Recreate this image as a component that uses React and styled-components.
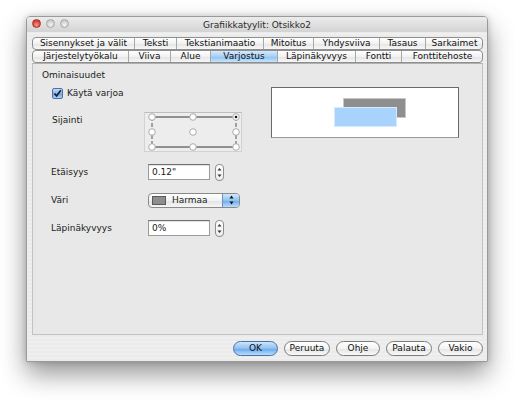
import React from "react";
import styled, { createGlobalStyle } from "styled-components";

const Global = createGlobalStyle`
  html, body { margin: 0; padding: 0; background: #ffffff; }
  body { font-family: "DejaVu Sans", "Liberation Sans", sans-serif; font-size: 9px; color: #1a1a1a; }
`;

const Page = styled.div`
  width: 515px;
  height: 400px;
  padding: 16px 0 0 26px;
  box-sizing: border-box;
`;

const Window = styled.div`
  width: 462px;
  height: 346px;
  box-sizing: border-box;
  border: 1px solid #9a9a9a;
  border-radius: 4px 4px 0 0;
  background: repeating-linear-gradient(#efefef 0 2px, #ebebeb 2px 4px);
  box-shadow: 0 12px 26px rgba(0, 0, 0, 0.42), 0 0 6px rgba(0, 0, 0, 0.18);
  display: flex;
  flex-direction: column;
`;

const TitleBar = styled.div`
  height: 15px;
  flex: none;
  position: relative;
  display: flex;
  align-items: center;
  justify-content: center;
  background: linear-gradient(#ececec, #d3d3d3);
  border-radius: 3px 3px 0 0;
  color: #2a2a2a;
  font-size: 9px;
`;

const Lights = styled.div`
  position: absolute;
  left: 5px;
  top: 2px;
  display: flex;
  gap: 5px;
`;

const Light = styled.span`
  width: 9px;
  height: 9px;
  border-radius: 50%;
  box-sizing: border-box;
  border: 1px solid ${(p) => (p.$red ? "#a5322a" : "#a9a9a9")};
  background: ${(p) =>
    p.$red
      ? "radial-gradient(circle at 50% 70%, #f49a8c, #d9493a 60%, #b8302a)"
      : "radial-gradient(circle at 50% 70%, #f4f4f4, #d0d0d0 60%, #bcbcbc)"};
`;

const Body = styled.div`
  flex: 1;
  display: flex;
  flex-direction: column;
  padding: 5px 4px 5px 5px;
  min-height: 0;
`;

const TabRow = styled.div`
  display: flex;
  height: 13px;
  box-sizing: border-box;
  border: 1px solid #8e8e8e;
  border-radius: 4px;
  background: linear-gradient(#ffffff, #f2f2f2 50%, #e4e4e4 51%, #f7f7f7);
  overflow: hidden;
  flex: none;
`;

const Tab = styled.div`
  width: ${(p) => p.$w}px;
  flex: none;
  box-sizing: border-box;
  display: flex;
  align-items: center;
  justify-content: center;
  font-size: 9px;
  line-height: 11px;
  white-space: nowrap;
  color: #111;
  & + & { border-left: 1px solid #a8a8a8; }
  ${(p) =>
    p.$active &&
    `background: linear-gradient(#d6eafc, #a7cff4 50%, #8cc1f0 51%, #c7e4fc);`}
`;

const Panel = styled.div`
  flex: 1;
  box-sizing: border-box;
  border: 1px solid #c2c2c2;
  border-top-color: #b0b0b0;
  background: #e8e8e8;
  padding: 5px 23px 0 9px;
  display: flex;
  flex-direction: column;
`;

const GroupTitle = styled.div`
  height: 12px;
  line-height: 12px;
  font-size: 9px;
`;

const TopSection = styled.div`
  display: flex;
  margin-top: 6px;
`;

const LeftCol = styled.div`
  display: flex;
  flex-direction: column;
  padding-left: 10px;
`;

const CheckRow = styled.label`
  display: flex;
  align-items: center;
  gap: 4px;
  height: 12px;
  font-size: 9px;
`;

const CheckBox = styled.span`
  width: 11px;
  height: 11px;
  box-sizing: border-box;
  border: 1px solid #4d6fa0;
  border-radius: 2px;
  background: linear-gradient(#c3dcf8, #7fb1ea 50%, #5f9fe6 51%, #a9d3fb);
  display: flex;
  align-items: center;
  justify-content: center;
`;

const PosRow = styled.div`
  display: flex;
  margin-top: 13px;
`;

const Label = styled.div`
  width: ${(p) => p.$w}px;
  flex: none;
  font-size: 9px;
  line-height: ${(p) => (p.$lh ? p.$lh : 16)}px;
  padding-top: ${(p) => p.$pt || 0}px;
  white-space: nowrap;
`;

const PosBox = styled.div`
  width: 98px;
  height: 40px;
  box-sizing: border-box;
  border: 1px solid #d2d2d2;
  border-top-color: #bdbdbd;
  background: #ededed;
`;

const Preview = styled.div`
  margin-left: auto;
  width: 188px;
  height: 51px;
  box-sizing: border-box;
  border: 1px solid #6a6a6a;
  border-bottom-color: #9a9a9a;
  background: #ffffff;
`;

const Fields = styled.div`
  display: flex;
  flex-direction: column;
  gap: 12px;
  margin-top: 12px;
  padding-left: 9px;
`;

const FieldRow = styled.div`
  display: flex;
  align-items: center;
  height: 16px;
`;

const TextInput = styled.div`
  width: 62px;
  height: 16px;
  box-sizing: border-box;
  border: 1px solid #9c9c9c;
  border-top-color: #6e6e6e;
  background: #ffffff;
  box-shadow: inset 0 1px 1px rgba(0, 0, 0, 0.12);
  font-size: 9px;
  line-height: 14px;
  padding-left: 3px;
`;

const Spinner = styled.div`
  width: 9px;
  height: 17px;
  margin-left: 5px;
  box-sizing: border-box;
  border: 1px solid #8e8e8e;
  border-radius: 4px;
  background: linear-gradient(#ffffff, #ececec);
  display: flex;
  align-items: center;
  justify-content: center;
`;

const Popup = styled.div`
  width: 92px;
  height: 15px;
  box-sizing: border-box;
  border: 1px solid #8a8a8a;
  border-radius: 4px;
  display: flex;
  overflow: hidden;
  background: linear-gradient(#ffffff, #f3f3f3 50%, #e3e3e3 51%, #f6f6f6);
`;

const PopupMain = styled.div`
  flex: 1;
  display: flex;
  align-items: center;
  padding-left: 3px;
  gap: 6px;
  font-size: 9px;
`;

const Swatch = styled.span`
  width: 14px;
  height: 9px;
  box-sizing: border-box;
  border: 1px solid #5a5a5a;
  background: #8e8e8e;
`;

const PopupArrow = styled.div`
  width: 16px;
  flex: none;
  border-left: 1px solid #6a8fc0;
  background: linear-gradient(#d3e8fc, #8fc2f1 50%, #6aaaea 51%, #b9dcfc);
  display: flex;
  align-items: center;
  justify-content: center;
`;

const ButtonRow = styled.div`
  display: flex;
  justify-content: flex-end;
  gap: 6px;
  margin-top: 6px;
  height: 15px;
  flex: none;
`;

const Button = styled.button`
  width: ${(p) => p.$w}px;
  height: 15px;
  padding: 0;
  box-sizing: border-box;
  border: 1px solid ${(p) => (p.$primary ? "#4a72a8" : "#7c7c7c")};
  border-radius: 8px;
  font-family: "DejaVu Sans", "Liberation Sans", sans-serif;
  font-size: 9px;
  line-height: 13px;
  color: #111;
  background: ${(p) =>
    p.$primary
      ? "linear-gradient(#cfe5fb, #8dc0f0 50%, #64a7ec 51%, #b8dcfd)"
      : "linear-gradient(#ffffff, #f4f4f4 50%, #e4e4e4 51%, #f9f9f9)"};
`;

const tabs1 = [
  ["Sisennykset ja välit", 101],
  ["Teksti", 42],
  ["Tekstianimaatio", 87],
  ["Mitoitus", 50],
  ["Yhdysviiva", 66],
  ["Tasaus", 46],
  ["Sarkaimet", 58],
];

const tabs2 = [
  ["Järjestelytyökalu", 95],
  ["Viiva", 42],
  ["Alue", 40],
  ["Varjostus", 67, true],
  ["Läpinäkyvyys", 78],
  ["Fontti", 46],
  ["Fonttitehoste", 82],
];

const SpinIcon = () => (
  <svg width="5" height="11" viewBox="0 0 5 11">
    <path d="M2.5 1 L4.5 3.5 L0.5 3.5 Z" fill="#333" />
    <path d="M2.5 10 L4.5 7.5 L0.5 7.5 Z" fill="#333" />
  </svg>
);

const PosGrid = () => {
  const xs = [7, 48, 91];
  const ys = [4, 19, 34];
  return (
    <svg width="96" height="38" viewBox="0 0 96 38">
      <line x1={xs[0]} y1={ys[0]} x2={xs[2]} y2={ys[0]} stroke="#333" strokeWidth="1" />
      <line x1={xs[0]} y1={ys[2]} x2={xs[2]} y2={ys[2]} stroke="#333" strokeWidth="1" />
      <line x1={xs[0]} y1={ys[0]} x2={xs[0]} y2={ys[2]} stroke="#555" strokeWidth="1" strokeDasharray="4 2" />
      <line x1={xs[2]} y1={ys[0]} x2={xs[2]} y2={ys[2]} stroke="#555" strokeWidth="1" strokeDasharray="4 2" />
      {ys.map((y) =>
        xs.map((x) => (
          <circle key={`${x}-${y}`} cx={x} cy={y} r="3.3" fill="#fdfdfd" stroke="#a4a4a4" strokeWidth="0.9" />
        ))
      )}
      <circle cx={xs[2]} cy={ys[0]} r="1.3" fill="#111" />
    </svg>
  );
};

export default function App() {
  return (
    <Page>
      <Global />
      <Window>
        <TitleBar>
          <Lights>
            <Light $red />
            <Light />
            <Light />
          </Lights>
          Grafiikkatyylit: Otsikko2
        </TitleBar>
        <Body>
          <TabRow>
            {tabs1.map(([t, w]) => (
              <Tab key={t} $w={w}>{t}</Tab>
            ))}
          </TabRow>
          <TabRow>
            {tabs2.map(([t, w, a]) => (
              <Tab key={t} $w={w} $active={a}>{t}</Tab>
            ))}
          </TabRow>
          <Panel>
            <GroupTitle>Ominaisuudet</GroupTitle>
            <TopSection>
              <LeftCol>
                <CheckRow>
                  <CheckBox>
                    <svg width="9" height="9" viewBox="0 0 9 9">
                      <path d="M1.5 4.5 L3.6 7 L7.8 1.2" fill="none" stroke="#1a1a1a" strokeWidth="1.6" />
                    </svg>
                  </CheckBox>
                  Käytä varjoa
                </CheckRow>
                <PosRow>
                  <Label $w={92} $pt={2} $lh={12}>Sijainti</Label>
                  <PosBox>
                    <PosGrid />
                  </PosBox>
                </PosRow>
              </LeftCol>
              <Preview>
                <svg width="186" height="49" viewBox="0 0 186 49">
                  <rect x="71.5" y="10.5" width="62" height="19" fill="#8e8e8e" stroke="#c8c8c8" />
                  <rect x="62.5" y="19.5" width="62" height="19" fill="#a8d3fd" stroke="#d6ebff" />
                </svg>
              </Preview>
            </TopSection>
            <Fields>
              <FieldRow>
                <Label $w={97}>Etäisyys</Label>
                <TextInput>0.12"</TextInput>
                <Spinner><SpinIcon /></Spinner>
              </FieldRow>
              <FieldRow>
                <Label $w={97}>Väri</Label>
                <Popup>
                  <PopupMain>
                    <Swatch />
                    Harmaa
                  </PopupMain>
                  <PopupArrow>
                    <svg width="5" height="10" viewBox="0 0 5 10">
                      <path d="M2.5 0.5 L4.5 3.5 L0.5 3.5 Z" fill="#111" />
                      <path d="M2.5 9.5 L4.5 6.5 L0.5 6.5 Z" fill="#111" />
                    </svg>
                  </PopupArrow>
                </Popup>
              </FieldRow>
              <FieldRow>
                <Label $w={97}>Läpinäkyvyys</Label>
                <TextInput>0%</TextInput>
                <Spinner><SpinIcon /></Spinner>
              </FieldRow>
            </Fields>
          </Panel>
          <ButtonRow>
            <Button $w={45} $primary>OK</Button>
            <Button $w={46}>Peruuta</Button>
            <Button $w={44}>Ohje</Button>
            <Button $w={46}>Palauta</Button>
            <Button $w={45}>Vakio</Button>
          </ButtonRow>
        </Body>
      </Window>
    </Page>
  );
}
